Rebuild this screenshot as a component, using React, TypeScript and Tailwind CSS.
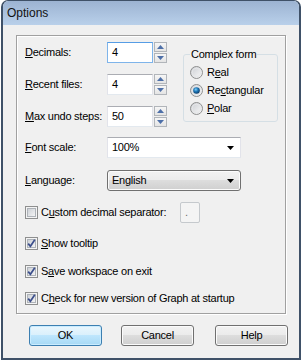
import { useId } from "react";
import type { ReactNode } from "react";

// Win7 classic-ish controls
function Edit({ value, focused, w }: { value: string; focused?: boolean; w: string }) {
  return (
    <div
      className={
        focused
          ? `${w} h-[21px] flex items-center px-[4px] bg-white border border-[#7eb4ea] border-t-[#569de5]`
          : `${w} h-[21px] flex items-center px-[4px] bg-white border border-[#e2e3ea] border-t-[#abadb3] border-b-[#e3e9ef]`
      }
    >
      {value}
    </div>
  );
}

function SpinArrow({ down }: { down?: boolean }) {
  return (
    <svg width="7" height="4" viewBox="0 0 7 4">
      <polygon points={down ? "0,0 7,0 3.5,4" : "0,4 7,4 3.5,0"} fill="#4d6fa8" />
    </svg>
  );
}

function Spinner() {
  return (
    <div className="ml-[1px] w-[13px] h-[21px] flex flex-col gap-px">
      <div className="h-[10px] flex items-center justify-center border border-[#b1b5ba] bg-[linear-gradient(to_bottom,#f6f6f6,#e4e4e4)]">
        <SpinArrow />
      </div>
      <div className="h-[10px] flex items-center justify-center border border-[#b1b5ba] bg-[linear-gradient(to_bottom,#f6f6f6,#e4e4e4)]">
        <SpinArrow down />
      </div>
    </div>
  );
}

function SpinRow({ label, value, focused }: { label: ReactNode; value: string; focused?: boolean }) {
  return (
    <div className="flex items-center h-[21px]">
      <span className="w-[82px]">{label}</span>
      <Edit value={value} focused={focused} w="w-[46px]" />
      <Spinner />
    </div>
  );
}

function ComboArrow() {
  return (
    <svg width="7" height="4" viewBox="0 0 7 4">
      <polygon points="0,0 7,0 3.5,4" fill="#000" />
    </svg>
  );
}

function CheckBox({ checked }: { checked?: boolean }) {
  const id = useId();
  return (
    <svg width="13" height="13" viewBox="0 0 13 13" className="shrink-0">
      <defs>
        <linearGradient id={id} x1="0" y1="0" x2="1" y2="1">
          <stop offset="0" stopColor="#cbcfd5" />
          <stop offset="1" stopColor="#f6f6f6" />
        </linearGradient>
      </defs>
      <rect x="0.5" y="0.5" width="12" height="12" fill="#f4f4f4" stroke="#8e8f8f" />
      <rect x="2.5" y="2.5" width="8" height="8" fill={`url(#${id})`} stroke="#aeb3b9" />
      {checked && (
        <path d="M3.2 6.6 L5.4 9.3 L9.8 2.8" fill="none" stroke="#3c4f8c" strokeWidth="1.7" />
      )}
    </svg>
  );
}

function Radio({ checked }: { checked?: boolean }) {
  const id = useId();
  return (
    <svg width="13" height="13" viewBox="0 0 13 13" className="shrink-0">
      <defs>
        <linearGradient id={`${id}a`} x1="0" y1="0" x2="1" y2="1">
          <stop offset="0" stopColor="#c9ccd1" />
          <stop offset="1" stopColor="#fbfbfb" />
        </linearGradient>
        <radialGradient id={`${id}b`} cx="0.4" cy="0.35" r="0.7">
          <stop offset="0" stopColor="#7fd0fa" />
          <stop offset="0.45" stopColor="#1f78b8" />
          <stop offset="1" stopColor="#0a3560" />
        </radialGradient>
      </defs>
      <circle cx="6.5" cy="6.5" r="6" fill={`url(#${id}a)`} stroke="#8e8f8f" />
      <circle cx="6.5" cy="6.5" r="4.3" fill="none" stroke="#e6e7e9" />
      {checked && <circle cx="6.5" cy="6.5" r="3.3" fill={`url(#${id}b)`} />}
    </svg>
  );
}

function CheckRow({ label, checked, cls }: { label: ReactNode; checked?: boolean; cls: string }) {
  return (
    <div className={`${cls} flex items-center h-[17px]`}>
      <CheckBox checked={checked} />
      <span className="ml-[3px]">{label}</span>
    </div>
  );
}

function RadioRow({ label, checked }: { label: ReactNode; checked?: boolean }) {
  return (
    <div className="flex items-center h-[18px]">
      <Radio checked={checked} />
      <span className="ml-[4px]">{label}</span>
    </div>
  );
}

function Button({ children, primary, cls }: { children: ReactNode; primary?: boolean; cls: string }) {
  return (
    <div
      className={
        primary
          ? `${cls} w-[73px] h-[21px] flex items-center justify-center rounded-[3px] border border-[#3c7fb1] shadow-[inset_0_0_0_1px_#c9ecff] bg-[linear-gradient(to_bottom,#eaf6fd,#d9f0fc_50%,#bee6fd_50%,#a7d9f5)]`
          : `${cls} w-[73px] h-[21px] flex items-center justify-center rounded-[3px] border border-[#707070] shadow-[inset_0_0_0_1px_#fbfbfb] bg-[linear-gradient(to_bottom,#f2f2f2,#ebebeb_50%,#dddddd_50%,#cfcfcf)]`
      }
    >
      {children}
    </div>
  );
}

const U = ({ children }: { children: ReactNode }) => <span className="underline">{children}</span>;

export default function App() {
  return (
    <div className="w-[302px] h-[361px] bg-white pl-px font-['Liberation_Sans',Arial,sans-serif] text-[11px] leading-[13px] tracking-[-0.25px] text-black">
      <div className="w-[300px] h-[360px] flex flex-col rounded-t-[7px] border-t border-x-2 border-b-2 border-[#3f5168] overflow-hidden">
        <div className="h-[24px] shrink-0 flex items-center pl-[4px] bg-[linear-gradient(to_bottom,#9cb3d2,#b9d0ea)] text-[12px] tracking-normal text-[#121212]">
          Options
        </div>
        <div className="flex-1 bg-[#f0f0f0] flex flex-col">
          {/* main bevel box */}
          <div className="ml-[13px] mt-[10px] w-[270px] h-[279px] border border-[#a0a0a0] shadow-[inset_1px_1px_0_#ffffff,1px_1px_0_#ffffff] pl-[8px] pt-[6px] flex flex-col">
            <div className="flex">
              <div className="flex flex-col gap-[11px]">
                <SpinRow label={<><U>D</U>ecimals:</>} value="4" focused />
                <SpinRow label={<><U>R</U>ecent files:</>} value="4" />
                <SpinRow label={<><U>M</U>ax undo steps:</>} value="50" />
              </div>
              <fieldset className="ml-[16px] mt-[6px] w-[95px] h-[74px] border border-[#d5dfe5] rounded-[3px] pl-[6px]">
                <legend className="px-[1px]">Complex form</legend>
                <div className="mt-[2px]">
                  <RadioRow label={<>R<U>e</U>al</>} />
                  <RadioRow label={<>Re<U>c</U>tangular</>} checked />
                  <RadioRow label={<><U>P</U>olar</>} />
                </div>
              </fieldset>
            </div>

            <div className="mt-[10px] flex items-center h-[21px]">
              <span className="w-[82px]"><U>F</U>ont scale:</span>
              <div className="w-[134px] h-[21px] flex items-center justify-between pl-[4px] pr-[6px] bg-white border border-[#e2e3ea] border-t-[#abadb3] border-b-[#e3e9ef]">
                <span>100%</span>
                <ComboArrow />
              </div>
            </div>

            <div className="mt-[12px] flex items-center h-[21px]">
              <span className="w-[82px]"><U>L</U>anguage:</span>
              <div className="w-[134px] h-[21px] flex items-center justify-between pl-[4px] pr-[6px] rounded-[3px] border border-[#707070] shadow-[inset_0_0_0_1px_#fbfbfb] bg-[linear-gradient(to_bottom,#f2f2f2,#ebebeb_50%,#dddddd_50%,#cfcfcf)]">
                <span>English</span>
                <ComboArrow />
              </div>
            </div>

            <div className="mt-[11px] flex items-center h-[21px]">
              <CheckBox />
              <span className="ml-[3px] w-[139px]">C<U>u</U>stom decimal separator:</span>
              <div className="w-[20px] h-[21px] flex items-center pl-[4px] rounded-[2px] border border-[#c5c9cd] bg-[#f4f4f4] text-[#6d6d6d]">
                .
              </div>
            </div>

            <CheckRow cls="mt-[12px]" checked label={<><U>S</U>how tooltip</>} />
            <CheckRow cls="mt-[11px]" checked label={<>S<U>a</U>ve workspace on exit</>} />
            <CheckRow cls="mt-[10px]" checked label={<>C<U>h</U>eck for new version of Graph at startup</>} />
          </div>

          <div className="mt-[11px] flex">
            <Button primary cls="ml-[26px]">OK</Button>
            <Button cls="ml-[19px]">Cancel</Button>
            <Button cls="ml-[21px]">Help</Button>
          </div>
        </div>
      </div>
    </div>
  );
}
